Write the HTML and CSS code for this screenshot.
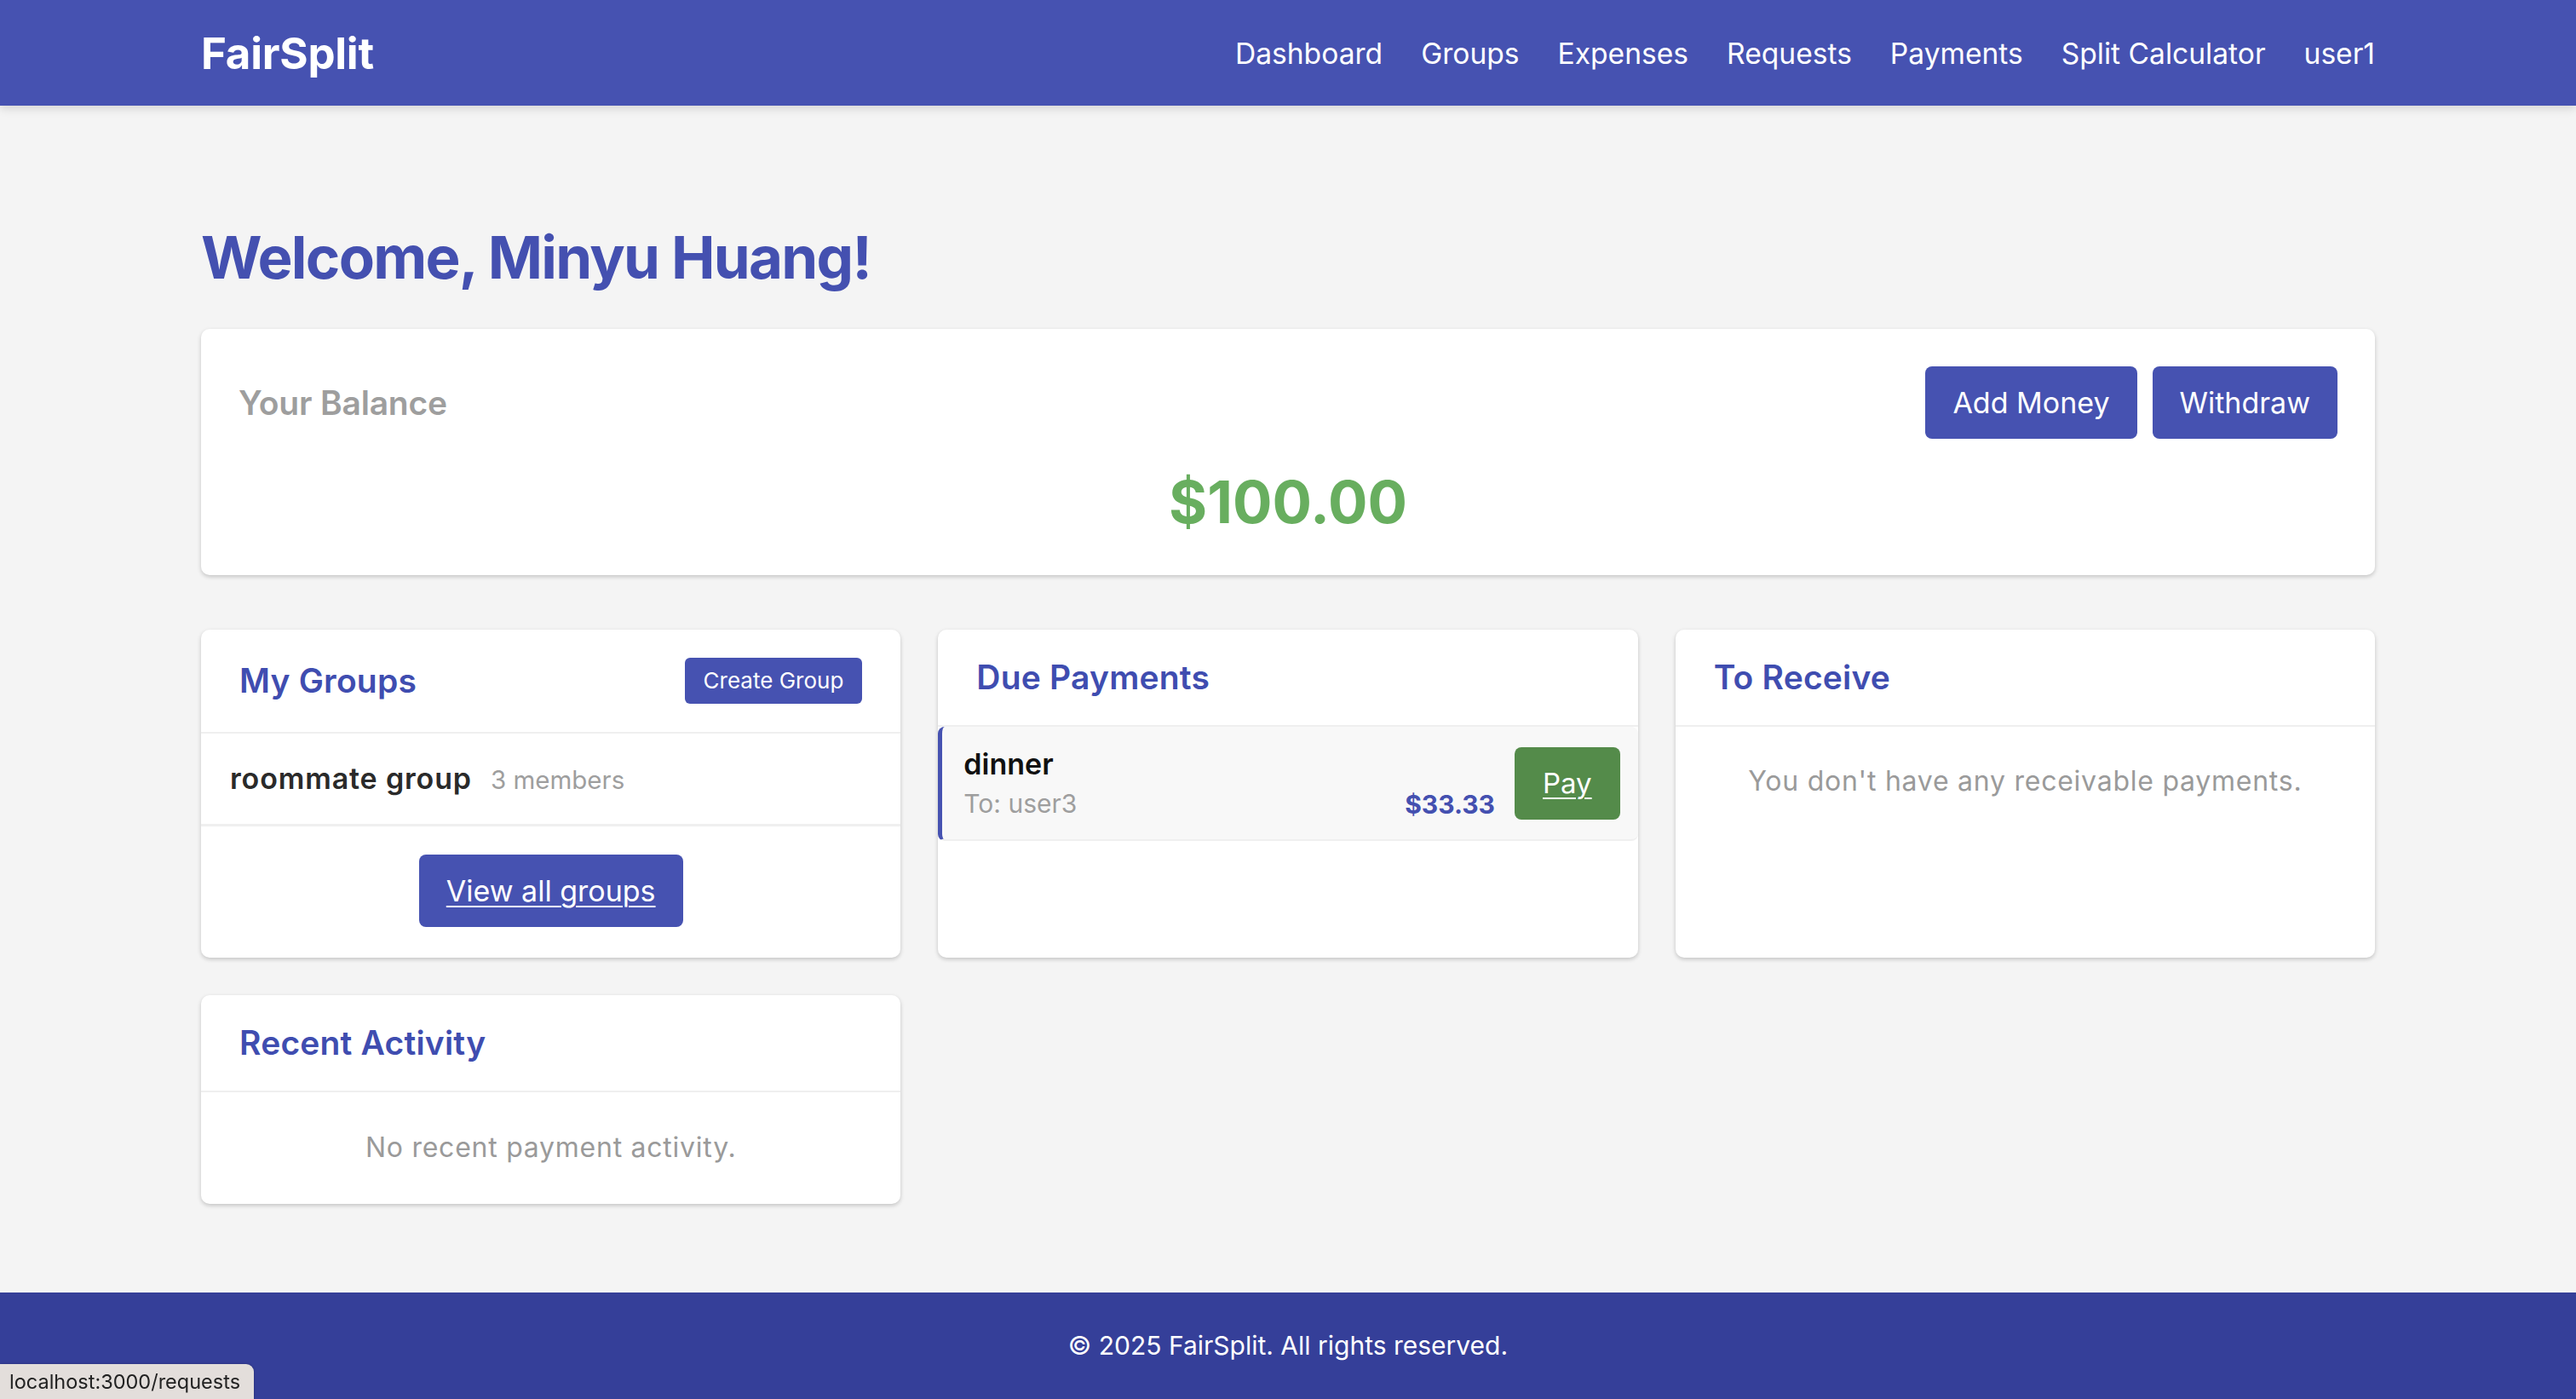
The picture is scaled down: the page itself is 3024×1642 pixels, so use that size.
FILE: index.html
```html
<!DOCTYPE html>
<html lang="en">
<head>
<meta charset="utf-8">
<title>FairSplit</title>
<link rel="stylesheet" href="styles.css">
</head>
<body>
<header class="navbar">
  <div class="container nav-inner">
    <a class="brand" href="#">FairSplit</a>
    <nav class="nav-links">
      <a href="#">Dashboard</a>
      <a href="#">Groups</a>
      <a href="#">Expenses</a>
      <a href="#">Requests</a>
      <a href="#">Payments</a>
      <a href="#">Split Calculator</a>
      <a href="#">user1</a>
    </nav>
  </div>
</header>

<main class="container main">
  <h1 class="welcome">Welcome, Minyu Huang!</h1>

  <section class="card balance-card">
    <div class="balance-head">
      <h2 class="balance-label">Your Balance</h2>
      <div class="balance-actions">
        <button class="btn">Add Money</button>
        <button class="btn">Withdraw</button>
      </div>
    </div>
    <div class="balance-amount">$100.00</div>
  </section>

  <div class="dash-grid">
    <section class="card">
      <div class="card-header">
        <h3 class="card-title">My Groups</h3>
        <button class="btn btn-small">Create Group</button>
      </div>
      <div class="group-item">
        <span class="group-name">roommate group</span>
        <span class="group-meta">3 members</span>
      </div>
      <div class="card-footer">
        <a class="btn btn-link" href="#">View all groups</a>
      </div>
    </section>

    <section class="card">
      <div class="card-header">
        <h3 class="card-title">Due Payments</h3>
      </div>
      <div class="pay-item">
        <div class="pay-info">
          <div class="pay-title">dinner</div>
          <div class="pay-to">To: user3</div>
        </div>
        <div class="pay-right">
          <span class="pay-amount">$33.33</span>
          <a class="btn btn-pay" href="#">Pay</a>
        </div>
      </div>
    </section>

    <section class="card">
      <div class="card-header">
        <h3 class="card-title">To Receive</h3>
      </div>
      <p class="empty">You don't have any receivable payments.</p>
    </section>

    <section class="card">
      <div class="card-header">
        <h3 class="card-title">Recent Activity</h3>
      </div>
      <p class="empty empty-activity">No recent payment activity.</p>
    </section>
  </div>
</main>

<footer class="footer">
  <p>© 2025 FairSplit. All rights reserved.</p>
</footer>

<div class="status-bubble">localhost:3000/requests</div>
</body>
</html>
```

FILE: styles.css
```css
* { box-sizing: border-box; }

body {
  margin: 0;
  background: #f4f4f4;
  font-family: Inter, "Noto Sans", sans-serif;
  color: #222;
}

a { color: inherit; text-decoration: none; }

.container {
  max-width: 2552px;
  margin: 0 auto;
}

/* Navbar */
.navbar {
  background: #4652b1;
  height: 124px;
  box-shadow: 0 4px 10px rgba(0, 0, 0, 0.12);
  position: relative;
  z-index: 1;
}
.nav-inner {
  height: 100%;
  display: flex;
  align-items: center;
  justify-content: space-between;
}
.brand {
  color: #fff;
  font-weight: 700;
  font-size: 51px;
  letter-spacing: -0.005em;
}
.nav-links {
  display: flex;
  gap: 45px;
  font-size: 33.6px;
  color: #fff;
}

/* Main */
.main {
  padding: 137px 0 104px;
}
.welcome {
  margin: 0 0 42px;
  font-size: 69px;
  line-height: 1.2;
  font-weight: 700;
  letter-spacing: -0.025em;
  color: #4450b0;
}

.card {
  background: #fff;
  border-radius: 10px;
  box-shadow: 0 2px 5px rgba(0, 0, 0, 0.2);
  overflow: hidden;
}

.balance-card {
  padding: 44px;
}
.balance-head {
  display: flex;
  align-items: center;
  justify-content: space-between;
}
.balance-label {
  margin: 0;
  font-size: 39px;
  font-weight: 600;
  color: #9e9e9e;
  letter-spacing: -0.005em;
}
.balance-actions {
  display: flex;
  gap: 18px;
}
.balance-amount {
  margin-top: 32px;
  text-align: center;
  font-size: 69px;
  line-height: 84px;
  font-weight: 700;
  color: #68ae5f;
}

.btn {
  display: inline-block;
  border: none;
  background: #4652b1;
  color: #fff;
  font-family: Inter, "Noto Sans", sans-serif;
  font-size: 34px;
  line-height: 43px;
  padding: 21px 32px;
  border-radius: 8px;
  cursor: pointer;
}
.btn-small {
  font-size: 26px;
  line-height: 30px;
  padding: 12px 22px;
  border-radius: 6px;
}
.btn-link {
  text-decoration: underline;
  text-underline-offset: 5px;
  text-decoration-thickness: 2px;
  padding: 21px 32px;
}

/* Dashboard grid */
.dash-grid {
  margin-top: 64px;
  display: grid;
  grid-template-columns: repeat(3, 1fr);
  gap: 44px;
}
.card-header {
  display: flex;
  align-items: center;
  justify-content: space-between;
  padding: 33px 45px;
  border-bottom: 2px solid #efefef;
}
.card-title {
  margin: 0;
  font-size: 39px;
  line-height: 46px;
  font-weight: 600;
  color: #3f4db0;
  letter-spacing: 0.005em;
}

.group-item {
  display: flex;
  align-items: baseline;
  gap: 22px;
  padding: 33px 34px 32px;
  border-bottom: 3px solid #efefef;
  line-height: 40px;
}
.group-name {
  font-size: 34px;
  font-weight: 600;
  color: #2a2a2a;
  letter-spacing: 0.025em;
}
.group-meta {
  font-size: 29.5px;
  color: #9e9e9e;
}
.card-footer {
  padding: 33px 34px 36px;
  text-align: center;
}

.pay-item {
  display: flex;
  align-items: center;
  justify-content: space-between;
  background: #f8f8f8;
  border-left: 5px solid #4652b1;
  border-radius: 8px;
  border-bottom: 2px solid #efefef;
  padding: 24px 21px 22px 25px;
}
.pay-title {
  font-size: 34px;
  line-height: 40px;
  font-weight: 600;
  color: #111;
}
.pay-to {
  margin-top: 6px;
  font-size: 30px;
  line-height: 40px;
  color: #9e9e9e;
}
.pay-right {
  display: flex;
  align-items: flex-end;
  gap: 23px;
}
.pay-amount {
  font-size: 30px;
  line-height: 36px;
  font-weight: 700;
  color: #4450b0;
}
.btn-pay {
  background: #548b4a;
  font-size: 33px;
  padding: 21px 33px;
  text-decoration: underline;
  text-underline-offset: 5px;
  text-decoration-thickness: 2px;
}

.empty {
  margin: 0;
  padding: 40px 44px;
  text-align: center;
  font-size: 32px;
  line-height: 1.5;
  letter-spacing: 0.75px;
  color: #9a9a9a;
}
.empty-activity {
  padding: 41px 44px 42px;
}

/* Footer */
.footer {
  background: #353f99;
  color: #fff;
  text-align: center;
  padding: 40px 0;
}
.footer p {
  margin: 0;
  font-size: 30px;
  line-height: 1.5;
}

/* Browser status bubble overlay */
.status-bubble {
  position: fixed;
  left: 0;
  bottom: 0;
  width: 298px;
  height: 41px;
  padding: 0 11px;
  background: #e3dedb;
  border-top-right-radius: 9px;
  font-size: 23.5px;
  line-height: 41px;
  color: #222;
  white-space: nowrap;
  box-shadow: 0 0 3px rgba(0, 0, 0, 0.25);
}
```
